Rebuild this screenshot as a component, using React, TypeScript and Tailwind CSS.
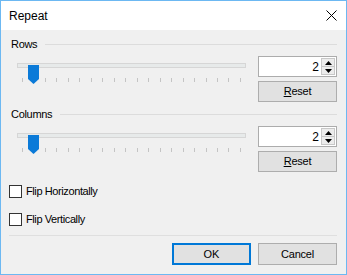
import React from 'react';

const TICKS = Array.from({ length: 20 }, (_, i) => i);

function GroupLabel({ text }: { text: string }) {
  return (
    <div className="flex items-center h-[12px]">
      <span className="ml-[2px] text-[11px] leading-[12px] tracking-[-0.3px] text-black">{text}</span>
      <div className="ml-[8px] flex-1 h-px bg-[#dcdcdc]" />
    </div>
  );
}

function Slider() {
  return (
    <div className="relative w-[229px]">
      <div className="mt-[7px] h-[5px] border border-[#d6d6d6] bg-[#e7eaea]" />
      <div className="mt-[10px] flex justify-between px-[5px]">
        {TICKS.map((t) => (
          <div key={t} className="w-px h-[4px] bg-[#c4c4c4]" />
        ))}
      </div>
      {/* thumb */}
      <svg className="absolute left-[11px] top-[2px]" width="11" height="19" viewBox="0 0 11 19">
        <path d="M0 0 H11 V14 L5.5 19 L0 14 Z" fill="#0a7ad8" />
      </svg>
    </div>
  );
}

function Spinner({ value }: { value: number }) {
  return (
    <div className="flex h-[21px] border border-[#acacac] bg-white">
      <div className="flex-1 flex items-center justify-end pr-[2px] text-[12px] leading-none">{value}</div>
      <div className="w-[15px] flex flex-col py-px pr-px">
        <div className="flex-1 flex items-center justify-center bg-[#ececec] border border-[#c8c8c8]">
          <svg width="7" height="4" viewBox="0 0 7 4">
            <path d="M0 4 L3.5 0 L7 4 Z" fill="#000" />
          </svg>
        </div>
        <div className="flex-1 flex items-center justify-center bg-[#ececec] border border-t-0 border-[#c8c8c8]">
          <svg width="7" height="4" viewBox="0 0 7 4">
            <path d="M0 0 L7 0 L3.5 4 Z" fill="#000" />
          </svg>
        </div>
      </div>
    </div>
  );
}

function ResetButton() {
  return (
    <div className="h-[21px] border border-[#adadad] bg-[#e1e1e1] flex items-center justify-center text-[11px] tracking-[-0.2px]">
      <span>
        <span className="underline underline-offset-[1px]">R</span>eset
      </span>
    </div>
  );
}

function Group({ label }: { label: string }) {
  return (
    <div>
      <GroupLabel text={label} />
      <div className="mt-[6px] flex">
        <div className="ml-[8px]">
          <Slider />
        </div>
        <div className="ml-auto w-[79px] flex flex-col gap-[4px]">
          <Spinner value={2} />
          <ResetButton />
        </div>
      </div>
    </div>
  );
}

function Check({ label }: { label: string }) {
  return (
    <div className="flex items-center h-[13px]">
      <div className="w-[13px] h-[13px] border border-[#333] bg-white" />
      <span className="ml-[4px] text-[11px] tracking-[-0.4px]">{label}</span>
    </div>
  );
}

export default function App() {
  return (
    <div className="w-[347px] h-[275px] border border-[#6cb8f2] flex flex-col font-['Liberation_Sans',Arial,sans-serif] text-black select-none">
      <div className="h-[29px] bg-white flex items-center justify-between pl-[8px] pr-[9px]">
        <span className="text-[12px]">Repeat</span>
        <svg width="11" height="11" viewBox="0 0 11 11">
          <path d="M0.5 0.5 L10.5 10.5 M10.5 0.5 L0.5 10.5" stroke="#000" strokeWidth="1" />
        </svg>
      </div>
      <div className="flex-1 bg-[#f0f0f0] flex flex-col pl-[8px] pr-[9px] pt-[8px]">
        <Group label="Rows" />
        <div className="mt-[6px]">
          <Group label="Columns" />
        </div>
        <div className="mt-[13px]">
          <Check label="Flip Horizontally" />
        </div>
        <div className="mt-[15px]">
          <Check label="Flip Vertically" />
        </div>
        <div className="mt-[9px] h-px bg-[#dfdfdf]" />
        <div className="mt-[7px] flex justify-end gap-[7px]">
          <div className="w-[79px] h-[22px] border-2 border-[#0078d7] bg-[#e1e1e1] flex items-center justify-center text-[11px]">OK</div>
          <div className="w-[79px] h-[22px] border border-[#adadad] bg-[#e1e1e1] flex items-center justify-center text-[11px] tracking-[-0.2px]">Cancel</div>
        </div>
      </div>
    </div>
  );
}
